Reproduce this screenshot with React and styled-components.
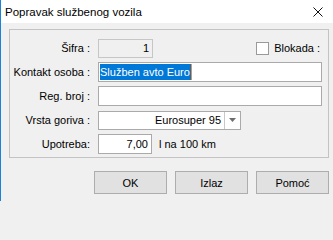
import React from "react";
import styled, { createGlobalStyle } from "styled-components";

const Global = createGlobalStyle`
  html, body { margin: 0; padding: 0; background: #f0f0f0; }
  body { font-family: "Liberation Sans", Arial, sans-serif; font-size: 11px; color: #000; }
  * { box-sizing: border-box; }
`;

const Window = styled.div`
  width: 333px;
  height: 201px;
  display: flex;
  flex-direction: column;
  background: #f0f0f0;
  border-left: 1px solid #1883d7;
  overflow: hidden;
`;

const TitleBar = styled.div`
  height: 23px;
  flex: none;
  background: #ffffff;
  display: flex;
  align-items: center;
  justify-content: space-between;
  padding: 0 10px 0 4px;
`;

const Title = styled.div`
  font-size: 11.5px;
  color: #000;
  padding-top: 1px;
`;

const Body = styled.div`
  padding: 6px 4px 0 8px;
  display: flex;
  flex-direction: column;
`;

const GroupBox = styled.div`
  border: 1px solid #c3c3c3;
  height: 129px;
  padding: 8px 6px 0 0;
  display: grid;
  grid-template-columns: 80px 1fr;
  column-gap: 8px;
  row-gap: 4px;
  grid-auto-rows: 20px;
`;

const Label = styled.div`
  display: flex;
  align-items: center;
  justify-content: flex-end;
  white-space: nowrap;
`;

const Controls = styled.div`
  display: flex;
  align-items: center;
  min-width: 0;
`;

const TextBox = styled.div`
  height: ${(p) => (p.$h ? p.$h : 20)}px;
  width: ${(p) => (p.$w ? `${p.$w}px` : "100%")};
  flex: none;
  border: 1px solid ${(p) => (p.$disabled ? "#c6c6c6" : "#aaaaaa")};
  background: ${(p) => (p.$disabled ? "#f0f0f0" : "#ffffff")};
  display: flex;
  align-items: center;
  justify-content: ${(p) => (p.$right ? "flex-end" : "flex-start")};
  padding: 0 ${(p) => (p.$right ? 3 : 0)}px 0 1px;
  white-space: nowrap;
  overflow: hidden;
`;

const Selection = styled.span`
  background: #0078d7;
  color: #ffffff;
  line-height: 16px;
  height: 16px;
  padding: 0 1px 0 0;
  border-right: 1px solid #ff8a2a;
`;

const Spacer = styled.div`
  flex: 1;
`;

const CheckGroup = styled.label`
  display: flex;
  align-items: center;
  gap: 5px;
  margin-right: 2px;
  white-space: nowrap;
`;

const CheckBox = styled.span`
  width: 13px;
  height: 13px;
  border: 1px solid #9a9a9a;
  background: #ffffff;
  display: inline-block;
`;

const Combo = styled.div`
  width: 143px;
  height: 19px;
  flex: none;
  border: 1px solid #aaaaaa;
  background: #ffffff;
  display: flex;
`;

const ComboText = styled.div`
  flex: 1;
  display: flex;
  align-items: center;
  justify-content: flex-end;
  padding-right: 3px;
  border-right: 1px solid #c8c8c8;
`;

const ComboButton = styled.div`
  width: 15px;
  display: flex;
  align-items: center;
  justify-content: center;
`;

const Unit = styled.span`
  margin-left: 7px;
  white-space: nowrap;
`;

const ButtonRow = styled.div`
  margin-top: 13px;
  display: flex;
  justify-content: flex-end;
  gap: 8px;
`;

const Button = styled.button`
  width: 73px;
  height: 23px;
  border: 1px solid #adadad;
  background: #e1e1e1;
  font-family: "Liberation Sans", Arial, sans-serif;
  font-size: 11px;
  color: #000;
  padding: 0;
`;

export default function App() {
  return (
    <>
      <Global />
      <Window>
        <TitleBar>
          <Title>Popravak službenog vozila</Title>
          <svg width="10" height="10" viewBox="0 0 10 10">
            <path d="M0.5 0.5 L9.5 9.5 M9.5 0.5 L0.5 9.5" stroke="#111" strokeWidth="1" />
          </svg>
        </TitleBar>
        <Body>
          <GroupBox>
            <Label>Šifra :</Label>
            <Controls>
              <TextBox $w={55} $disabled $right $h={19}>1</TextBox>
              <Spacer />
              <CheckGroup>
                <CheckBox />
                Blokada :
              </CheckGroup>
            </Controls>

            <Label>Kontakt osoba :</Label>
            <Controls>
              <TextBox>
                <Selection>Služben avto Euro</Selection>
              </TextBox>
            </Controls>

            <Label>Reg. broj :</Label>
            <Controls>
              <TextBox />
            </Controls>

            <Label>Vrsta goriva :</Label>
            <Controls>
              <Combo>
                <ComboText>Eurosuper 95</ComboText>
                <ComboButton>
                  <svg width="7" height="4" viewBox="0 0 7 4">
                    <path d="M0 0 L7 0 L3.5 4 Z" fill="#6d6d6d" />
                  </svg>
                </ComboButton>
              </Combo>
            </Controls>

            <Label>Upotreba:</Label>
            <Controls>
              <TextBox $w={54} $right>7,00</TextBox>
              <Unit>l na 100 km</Unit>
            </Controls>
          </GroupBox>
          <ButtonRow>
            <Button>OK</Button>
            <Button>Izlaz</Button>
            <Button>Pomoć</Button>
          </ButtonRow>
        </Body>
      </Window>
    </>
  );
}
